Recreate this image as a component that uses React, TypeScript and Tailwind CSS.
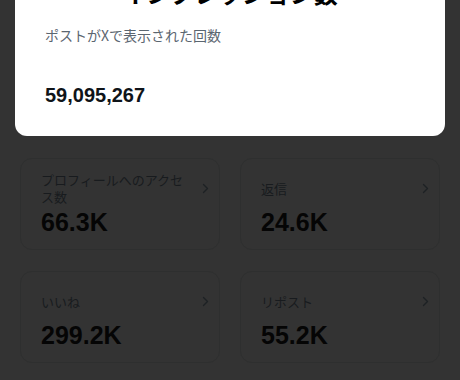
import React from "react";

const jp = { fontFamily: '"Noto Sans CJK JP", "Noto Sans", sans-serif' };
const num = { fontFamily: '"Liberation Sans", Arial, "Noto Sans CJK JP", sans-serif' };

function Chevron() {
  return (
    <svg width="7" height="11" viewBox="0 0 7 11" fill="none" className="shrink-0">
      <path d="M1.5 1.5 L5.5 5.5 L1.5 9.5" stroke="#1d2124" strokeWidth="1.3" strokeLinecap="round" strokeLinejoin="round" />
    </svg>
  );
}

function Stat({ label, value }: { label: string; value: string }) {
  return (
    <div className="rounded-[12px] border border-[#2e2f2f] bg-[#333333] pl-[20px] pr-[10px] pt-[12px] pb-[12px]">
      <div className="flex h-[34px] items-center justify-between gap-2">
        <div className="text-[13px] leading-[17px] text-[#181b1e] pr-[10px]" style={jp}>
          {label}
        </div>
        <Chevron />
      </div>
      <div className="mt-[2px] text-[25px] leading-[30px] font-bold text-[#050505]" style={num}>
        {value}
      </div>
    </div>
  );
}

export default function App() {
  return (
    <div className="w-[460px] h-[380px] overflow-hidden bg-[#333333] px-[15px]">
      <div className="-mt-[35px] rounded-[12px] bg-white pt-[12px] pb-[28px] pl-[30px] pr-[30px]">
        <div className="text-center text-[24px] leading-[32px] font-bold text-black" style={jp}>
          インプレッション数
        </div>
        <div className="mt-[16px] text-[14px] leading-[20px] text-[#5b6670]" style={jp}>
          ポストがXで表示された回数
        </div>
        <div className="mt-[37px] text-[20px] leading-[26px] font-bold text-[#0f1419]" style={num}>
          59,095,267
        </div>
      </div>
      <div className="mt-[22px] grid grid-cols-2 gap-x-[20px] gap-y-[21px] px-[5px]">
        <Stat label="プロフィールへのアクセス数" value="66.3K" />
        <Stat label="返信" value="24.6K" />
        <Stat label="いいね" value="299.2K" />
        <Stat label="リポスト" value="55.2K" />
      </div>
    </div>
  );
}
